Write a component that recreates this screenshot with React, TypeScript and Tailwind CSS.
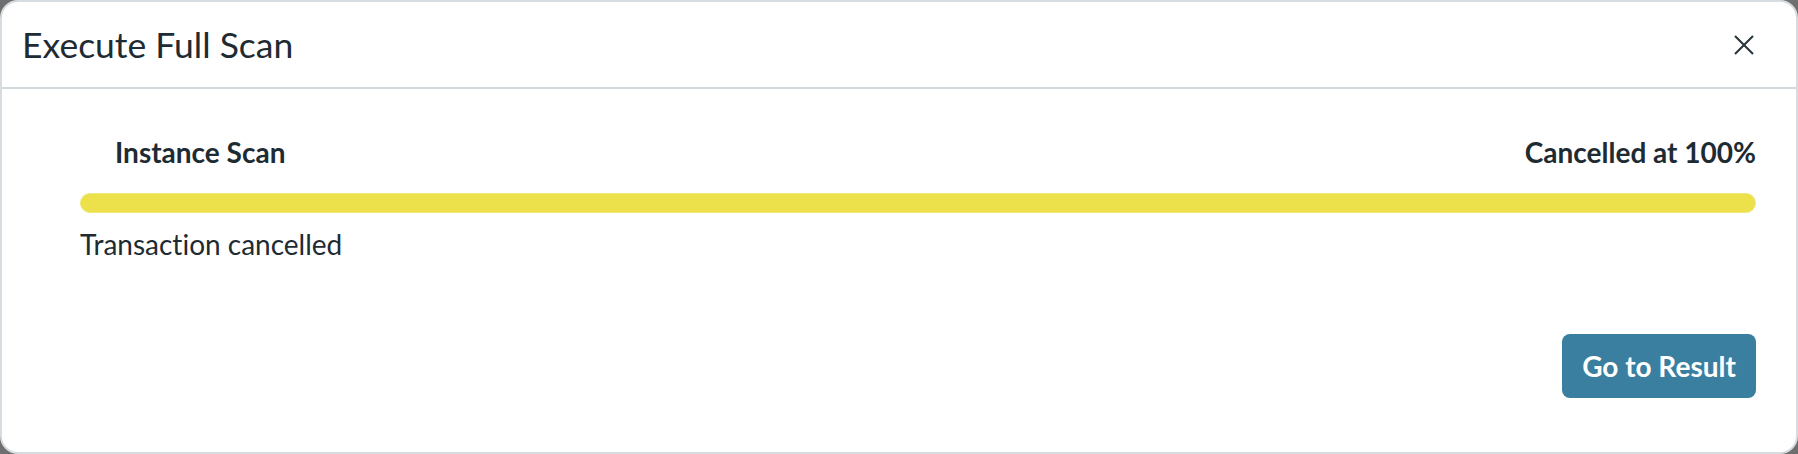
import React from 'react';

const ScanModal: React.FC = () => {
  return (
    <div className="w-[1798px] h-[454px] bg-[#6f6f6f]">
      <div
        className="flex flex-col h-full bg-white rounded-[18px] border-2 border-[#d6dce0] text-[#1e2b33]"
        style={{ fontFamily: 'Lato, "Open Sans", sans-serif' }}
      >
        {/* header */}
        <div className="flex items-center justify-between h-[87px] shrink-0 border-b-2 border-[#d3dade] pl-[20px] pr-[42px]">
          <h1 className="text-[35.5px] leading-none font-normal">Execute Full Scan</h1>
          <button className="w-[20px] h-[20px] text-[#27343b]" aria-label="Close">
            <svg viewBox="0 0 20 20" className="w-[20px] h-[20px]" fill="none" stroke="currentColor" strokeWidth="2">
              <path d="M1 1 L19 19 M19 1 L1 19" />
            </svg>
          </button>
        </div>

        {/* body */}
        <div className="flex flex-col flex-1 pl-[78px] pr-[40px]">
          <div className="flex items-center justify-between pl-[35px] pt-[46px] text-[28px] leading-[34px] font-bold">
            <span>Instance Scan</span>
            <span>Cancelled at 100%</span>
          </div>
          <div className="mt-[24px] h-[20px] rounded-full bg-[#ece04b] border border-[#f0e77a]" />
          <p className="mt-[14px] text-[28px] leading-[34px] [font-variant-ligatures:none]">Transaction cancelled</p>

          <div className="flex justify-end mt-auto mb-[54px]">
            <button className="h-[64px] w-[194px] rounded-[8px] bg-[#3a7fa0] text-white text-[28px] font-bold">
              Go to Result
            </button>
          </div>
        </div>
      </div>
    </div>
  );
};

export default function App() {
  return <ScanModal />;
}
